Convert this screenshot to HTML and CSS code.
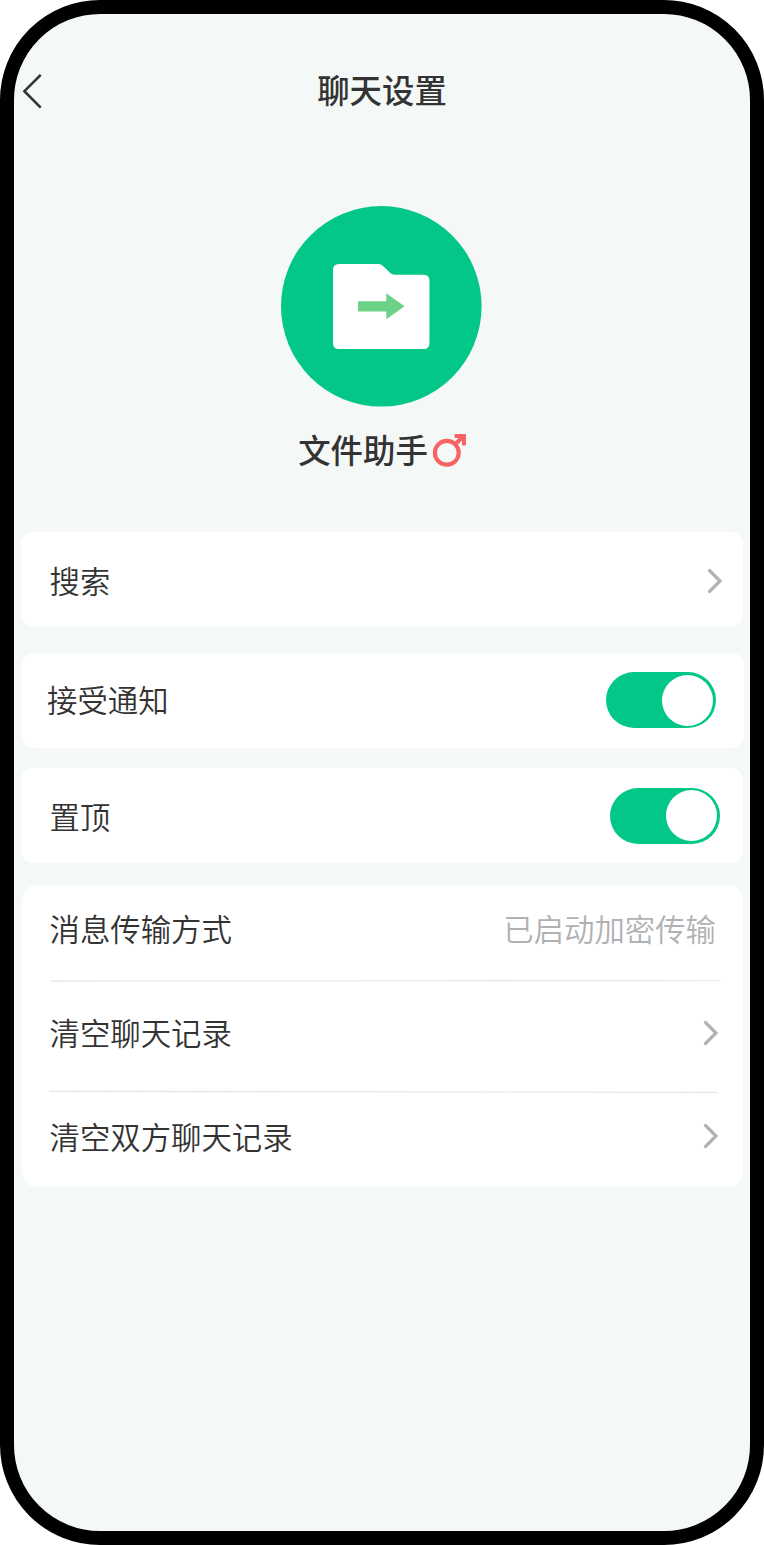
FILE: index.html
```html
<!DOCTYPE html>
<html lang="zh-CN">
<head>
<meta charset="utf-8">
<title>聊天设置</title>
<link rel="stylesheet" href="styles.css">
</head>
<body>
<div class="phone">
  <header class="header">
    <svg class="back" width="24" height="40" viewBox="0 0 24 40"><path d="M21.7 2.8 L5.4 19.2 L21.7 35.6"/></svg>
    <h1 class="title">聊天设置</h1>
  </header>
  <section class="profile">
    <svg class="avatar" width="202" height="202" viewBox="0 0 202 202">
      <circle class="avatar-bg" cx="101.3" cy="101.3" r="100.3"/>
      <path class="folder" d="M58 59 H98.5 Q101 59 103 61 L110 67.8 Q112 69.8 115 69.8 H143.5 Q149.5 69.8 149.5 75.8 V138 Q149.5 144 143.5 144 H59 Q53 144 53 138 V65 Q53 59 59 59 Z"/>
      <path class="arrow" d="M78 96.3 H106.3 V88.3 L124.5 101.3 L106.3 114.3 V106.5 H78 Z"/>
    </svg>
    <div class="name-row">
      <span class="name">文件助手</span>
      <svg class="gender" width="36" height="36" viewBox="0 0 36 36">
        <circle cx="15.8" cy="20.8" r="11.9"/>
        <path class="gender-line" d="M23.5 13 L31.5 5"/>
        <path class="gender-head" d="M24 2 H34.4 Q35 2 35 2.8 V13 Q33 14.4 31 13 V9 L28 6 H24 Q22.6 4 24 2 Z"/>
      </svg>
    </div>
  </section>
  <main class="list">
    <div class="card search">
      <span class="label">搜索</span>
      <svg class="chevron" width="18" height="28" viewBox="0 0 18 28"><path d="M3.5 3.5 L14 14 L3.5 24.5"/></svg>
    </div>
    <div class="card notify">
      <span class="label">接受通知</span>
      <div class="switch"><div class="knob"></div></div>
    </div>
    <div class="card pin">
      <span class="label">置顶</span>
      <div class="switch"><div class="knob"></div></div>
    </div>
    <div class="card group">
      <div class="row mode">
        <span class="label">消息传输方式</span>
        <span class="value">已启动加密传输</span>
      </div>
      <svg class="rule rule-first" width="670" height="3" viewBox="0 0 670 3"><path d="M0 2.2 L669.5 1.5"/></svg>
      <div class="row clear">
        <span class="label">清空聊天记录</span>
        <svg class="chevron" width="18" height="28" viewBox="0 0 18 28"><path d="M3.5 3.5 L14 14 L3.5 24.5"/></svg>
      </div>
      <svg class="rule rule-second" width="670" height="3" viewBox="0 0 670 3"><path d="M0 1.4 L668 2.3"/></svg>
      <div class="row clear-both">
        <span class="label">清空双方聊天记录</span>
        <svg class="chevron" width="18" height="28" viewBox="0 0 18 28"><path d="M3.5 3.5 L14 14 L3.5 24.5"/></svg>
      </div>
    </div>
  </main>
</div>
</body>
</html>
```

FILE: styles.css
```css
* { box-sizing: border-box; }

body {
  margin: 0;
  background: #fff;
  font-family: "Noto Sans CJK SC", sans-serif;
  color: #333;
}

svg { display: block; flex: none; }

.phone {
  width: 764px;
  height: 1545px;
  border: 14px solid #000;
  border-radius: 100px;
  background: #f4f8f7;
  overflow: hidden;
}

.header {
  display: grid;
  grid-template-columns: 100px 1fr 100px;
  align-items: center;
  height: 78px;
  margin-top: 38px;
}

.back { margin-left: 5px; margin-top: 2px; }
.back path { fill: none; stroke: #333; stroke-width: 2.6; }

.title {
  margin: 0;
  padding-bottom: 4px;
  text-align: center;
  font-size: 32.4px;
  font-weight: 500;
  line-height: 46px;
}

.profile {
  display: flex;
  flex-direction: column;
  align-items: center;
  height: 388px;
  padding-top: 75px;
}

.avatar { margin-right: 2px; }
.avatar-bg { fill: #03c788; }
.folder { fill: #fff; }
.arrow { fill: #6cd287; }

.name-row {
  display: flex;
  align-items: center;
  margin-top: 19px;
  margin-left: 1px;
}

.name {
  font-size: 32.4px;
  font-weight: 500;
  line-height: 46px;
}

.gender { margin: 2px 0 0 3px; }
.gender circle,
.gender-line { fill: none; stroke: #f76463; stroke-width: 4.2; }
.gender-head { fill: #f76463; }

.card {
  display: flex;
  align-items: center;
  justify-content: space-between;
  width: 722px;
  height: 95px;
  border-radius: 12px;
  background: #fff;
}

.label,
.value {
  font-size: 30.4px;
  font-weight: 350;
  line-height: 44px;
  white-space: nowrap;
}

.value { color: #b0b1b3; }

.search { margin: 14px 0 0 7px; padding: 1px 19px 0 28.5px; }
.notify { margin: 26px 0 0 8px; padding: 0 28.5px 1px 25px; }
.pin { margin: 20px 0 0 7px; padding: 0 23.5px 0 28.5px; }

.search .chevron { margin-top: 2px; }
.notify .label { margin-bottom: 2px; }
.pin .label { margin-top: 1px; }

.chevron path {
  fill: none;
  stroke: #b2b3b4;
  stroke-width: 3.2;
  stroke-linecap: round;
}

.switch {
  display: flex;
  justify-content: flex-end;
  width: 110px;
  height: 56px;
  padding: 2.5px;
  border-radius: 28px;
  background: #03c788;
}

.knob {
  width: 51px;
  height: 51px;
  border-radius: 50%;
  background: #fff;
}

.group {
  display: block;
  width: 721px;
  height: 302px;
  margin: 22px 0 0 8px;
  border-radius: 15px;
}

.row {
  display: flex;
  align-items: center;
  justify-content: space-between;
  padding-left: 27.5px;
  padding-right: 23px;
}

.mode { height: 94px; padding-right: 27px; padding-bottom: 8px; }
.clear { height: 108px; padding-bottom: 8px; }
.clear .chevron { margin-top: 1px; }
.clear-both { height: 86px; }

.rule path { fill: none; stroke: #e5e5e5; stroke-width: 1.2; }
.rule-first { margin-left: 28.5px; }
.rule-second { margin-left: 27px; }
```
